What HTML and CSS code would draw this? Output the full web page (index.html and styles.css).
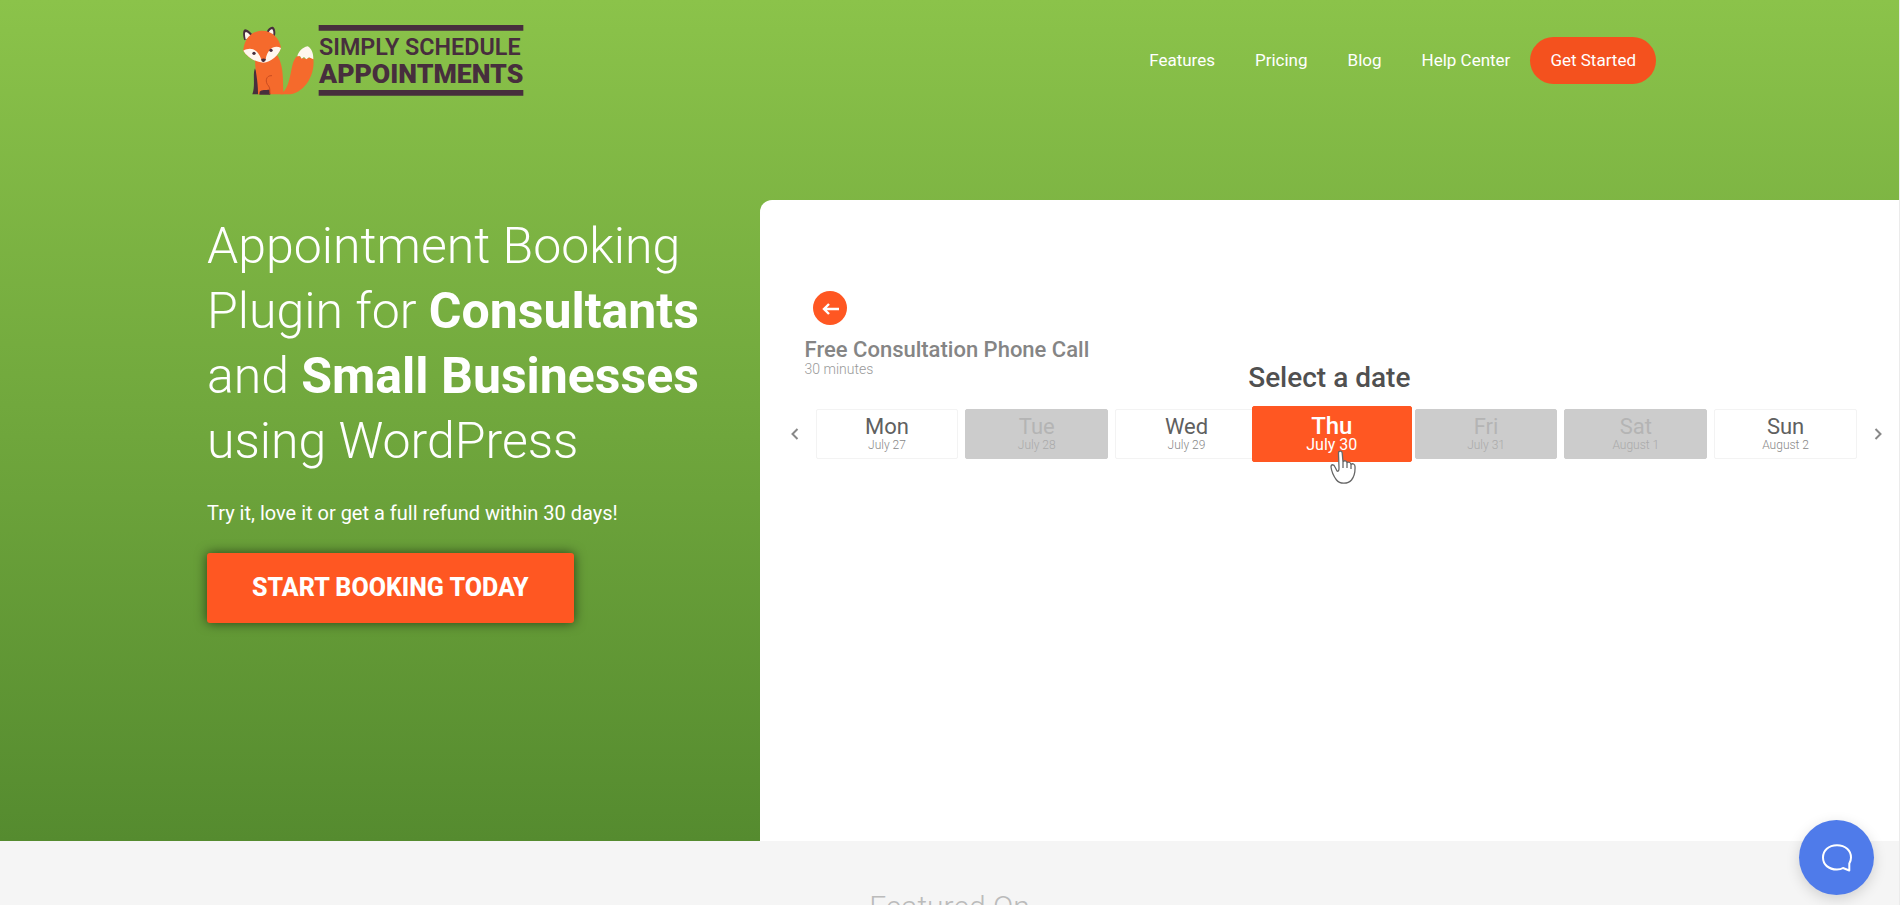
FILE: index.html
```html
<!DOCTYPE html>
<html lang="en">
<head>
<meta charset="utf-8">
<meta name="viewport" content="width=device-width, initial-scale=1">
<title>Simply Schedule Appointments</title>
<link rel="stylesheet" href="styles.css">
</head>
<body>
<div class="top">
  <header class="header">
    <a class="logo" href="#" aria-label="Simply Schedule Appointments">
      <svg class="logo-art" viewBox="38 30 843 213" width="281" height="71">
        <path fill="#f56a2c" d="M150 238 C190 215 175 130 205 122 C215 132 228 134 248 124 C258 175 225 232 180 238 Z"/>
        <path fill="#fff6ee" d="M232 94 C215 98 204 110 201 124 L209 123 L214 131 L221 126 L228 133 L236 127 L249 133 C250 116 243 99 232 94 Z"/>
        <path fill="#472e3d" d="M74 160 C66 180 76 210 66 238 L84 238 L86 190 Z"/>
        <path fill="#f56a2c" d="M76 128 C70 155 84 190 83 238 L160 238 C156 205 163 160 142 122 Z"/>
        <path fill="#472e3d" d="M88 230 C94 223 106 225 118 224 L120 239 L87 239 Z"/>
        <path fill="none" stroke="#c94b20" stroke-width="3" d="M125 182 C106 180 103 202 115 213 C120 220 118 230 119 237"/>
        <path fill="#472e3d" d="M42 76 C36 58 38 44 44 43 C54 44 64 54 69 64 Z M109 51 C113 40 122 33 129 36 C136 42 137 58 131 69 Z"/>
        <path fill="#fff6ee" d="M46 73 C43 60 43 51 47 51 C54 53 60 60 63 67 Z M115 52 C119 44 124 41 127 44 C130 49 130 58 127 64 Z"/>
        <path fill="#f56a2c" d="M39 107 C40 80 55 50 92 47 C125 45 148 70 152 99 C144 123 122 141 99 143 C76 142 50 126 39 107 Z"/>
        <path fill="#fff6ee" d="M39 107 C58 97 80 98 93 133 L106 133 C112 101 132 89 152 99 C144 123 122 141 99 143 C76 142 50 126 39 107 Z"/>
        <circle cx="71" cy="115" r="5" fill="#472e3d"/>
        <circle cx="122" cy="106" r="5" fill="#472e3d"/>
        <path fill="#472e3d" d="M92 133 Q99 128 107 132 Q106 141 99 142 Q93 140 92 133 Z"/>
        <path fill="#472e3d" d="M265 30 H879 V47 H265 Z M265 225 H879 V242 H265 Z"/>
        <text class="logo-line" x="266" y="121">SIMPLY SCHEDULE</text>
        <text class="logo-line logo-line-strong" x="266" y="204">APPOINTMENTS</text>
      </svg>
    </a>
    <nav class="nav">
      <a class="nav-link" href="#">Features</a>
      <a class="nav-link" href="#">Pricing</a>
      <a class="nav-link" href="#">Blog</a>
      <a class="nav-link" href="#">Help Center</a>
      <a class="nav-link nav-cta" href="#">Get Started</a>
    </nav>
  </header>

  <main class="hero">
    <section class="pitch">
      <h1 class="pitch-title">Appointment Booking Plugin for <strong>Consultants</strong> and <strong>Small Businesses</strong> using WordPress</h1>
      <p class="pitch-note">Try it, love it or get a full refund within 30 days!</p>
      <a class="pitch-button" href="#">START BOOKING TODAY</a>
    </section>

    <section class="demo">
      <button class="back" type="button" aria-label="Back">
        <svg viewBox="0 0 34 34" width="34" height="34" fill="none" stroke="#fff" stroke-width="2.400"><path d="M26 18 H11 M16 13 L11 18 L16 23"/></svg>
      </button>
      <div class="demo-head">
        <div class="demo-service">
          <h2 class="demo-title">Free Consultation Phone Call</h2>
          <p class="demo-length">30 minutes</p>
        </div>
        <h3 class="demo-prompt">Select a date</h3>
      </div>
      <div class="week">
        <button class="arrow" type="button" aria-label="Previous week">
          <svg viewBox="0 0 8 12" width="8" height="12"><path d="M6.500 1 L1.500 6 L6.500 11"/></svg>
        </button>
        <div class="days">
          <button class="day" type="button"><span class="day-name">Mon</span><span class="day-date">July 27</span></button>
          <button class="day day-off" type="button" disabled><span class="day-name">Tue</span><span class="day-date">July 28</span></button>
          <button class="day" type="button"><span class="day-name">Wed</span><span class="day-date">July 29</span></button>
          <button class="day day-picked" type="button"><span class="day-name">Thu</span><span class="day-date">July 30</span>
            <svg class="hand" viewBox="0 0 26 35" width="26" height="35"><path fill="#fff" stroke="#666" stroke-width="1.300" stroke-linejoin="round" d="M9 18 L8.500 3 C8.500 0.500 12 0.500 12.200 3 L13 12 C14 10 17 10.500 17 13 C18 11.500 20.500 12 21 14.500 C22.500 13 25 14 25 16.500 C25.300 22 24.500 26 21.500 30 C18 34 10 34.500 6.500 30 C3.500 26 1.500 21 1 17 C1 14 4 14 5 17 L7 21 C8.500 22 9 20 9 18 Z M13 12 V18 M17 13 V18 M21 14.500 V19"/></svg>
          </button>
          <button class="day day-off" type="button" disabled><span class="day-name">Fri</span><span class="day-date">July 31</span></button>
          <button class="day day-off" type="button" disabled><span class="day-name">Sat</span><span class="day-date">August 1</span></button>
          <button class="day" type="button"><span class="day-name">Sun</span><span class="day-date">August 2</span></button>
        </div>
        <button class="arrow" type="button" aria-label="Next week">
          <svg viewBox="0 0 8 12" width="8" height="12"><path d="M1.500 1 L6.500 6 L1.500 11"/></svg>
        </button>
      </div>
    </section>
  </main>
</div>

<section class="featured">
  <h2 class="featured-title">Featured On</h2>
</section>

<button class="chat" type="button" aria-label="Open chat">
  <svg viewBox="0 0 30 28" width="30" height="28" fill="none" stroke="#fff" stroke-width="2" stroke-linejoin="round"><path d="M15 1.200 C6.500 1.200 1 6.500 1 13.500 C1 20.500 6.500 25.500 15 25.500 C17.500 25.500 19.500 25 21 24 L27.300 26.500 V19.500 C28.500 17.500 29 15.500 29 13.500 C29 6.500 23.500 1.200 15 1.200 Z"/></svg>
</button>
</body>
</html>
```
FILE: styles.css
```css
* { box-sizing: border-box; }

html {
  background: #f5f5f5;
  overflow: hidden;
}

body {
  margin: 0;
  height: 100vh;
  overflow: hidden;
  border-right: 1px solid #ebebeb;
  background: #f5f5f5;
  font-family: Roboto, "Liberation Sans", sans-serif;
  color: #fff;
}

h1, h2, h3, p { margin: 0; }
a { color: inherit; text-decoration: none; }
button { font: inherit; border: 0; padding: 0; background: none; cursor: pointer; }
svg { display: block; }

.top { background: linear-gradient(#8bc34a, #558b2f); }

.header {
  display: flex;
  align-items: center;
  justify-content: space-between;
  max-width: 1485px;
  height: 120px;
  margin: 0 auto;
  padding: 0 36px;
}

.logo-line {
  font-size: 70px;
  font-weight: 600;
  fill: #472e3d;
}
.logo-line-strong {
  font-size: 80px;
  font-weight: 900;
}

.nav { display: flex; align-items: center; }
.nav-link {
  padding: 0 20px;
  font-size: 17px;
  line-height: 47px;
}
.nav-cta { border-radius: 24px; background: #f4511e; }

.hero {
  display: grid;
  grid-template-columns: 2fr 3fr;
  padding-top: 80px;
}

.pitch { padding: 14px 0 218px max(24px, calc((100vw - 1486px) / 2)); }
.pitch-title {
  max-width: 510px;
  font-size: 50px;
  font-weight: 300;
  line-height: 65px;
}
.pitch-title strong { font-weight: 700; }
.pitch-note {
  margin-top: 23px;
  font-size: 20px;
  line-height: 32px;
}
.pitch-button {
  display: inline-block;
  margin-top: 24px;
  padding: 0 45px;
  border-radius: 3px;
  background: #ff5722;
  box-shadow: 0 0 12px rgba(0, 0, 0, 0.6);
  font-size: 25px;
  font-weight: 800;
  line-height: 70px;
}

.demo {
  min-width: 0;
  padding: 91px 16px 0 30px;
  border-top-left-radius: 12px;
  background: #fff;
}
.back {
  display: block;
  margin-left: 23px;
  border-radius: 50%;
  background: #ff5722;
}
.demo-head {
  display: grid;
  grid-template-columns: 1fr auto 1fr;
  align-items: end;
  margin-right: 14px;
  padding-top: 12px;
}
.demo-service { padding: 0 0 16px 15px; }
.demo-title {
  color: #858585;
  font-size: 22px;
  font-weight: 500;
  line-height: 26px;
}
.demo-length {
  color: #999;
  font-size: 14px;
  font-weight: 300;
  line-height: 12px;
}
.demo-prompt {
  color: #505050;
  font-size: 28px;
  font-weight: 500;
  line-height: 26px;
}
.week {
  display: flex;
  align-items: center;
  gap: 16px;
  margin-top: 18px;
}
.arrow { padding: 0 1px; }
.arrow path { fill: none; stroke: #888; stroke-width: 2; }
.days {
  display: grid;
  grid-template-columns: repeat(7, 1fr);
  flex: 1;
  gap: 7px;
}
.day {
  display: flex;
  flex-direction: column;
  align-items: center;
  justify-content: center;
  min-height: 50px;
  border: 1px solid #f3f3f3;
  border-radius: 2px;
  background: #fff;
}
.day-name { color: #606060; font-size: 22px; line-height: 22px; }
.day-date { color: #888; font-size: 12px; font-weight: 300; line-height: 14px; }
.day-off { border-color: #ccc; background: #ccc; }
.day-off .day-name, .day-off .day-date { color: #b4b4b4; }
.day-off .day-date { color: #aaa; }
.day-picked {
  position: relative;
  z-index: 1;
  margin: -3px -4px -3px -13px;
  border-color: #ff5722;
  background: #ff5722;
}
.day-picked .day-name { color: #fff; font-weight: 500; font-size: 24px; }
.day-picked .day-date { color: #fff; font-size: 16px; font-weight: 400; line-height: 16px; }
.hand {
  position: absolute;
  left: 77px;
  top: 43px;
}

.featured { padding-top: 48px; }
.featured-title {
  color: #bbb;
  font-size: 30px;
  font-weight: 300;
  line-height: 36px;
  text-align: center;
}

.chat {
  position: fixed;
  right: 26px;
  bottom: 10px;
  display: grid;
  place-items: center;
  width: 75px;
  height: 75px;
  border-radius: 50%;
  background: #4f7bea;
  box-shadow: 0 4px 14px rgba(0, 0, 0, 0.15);
}
```
